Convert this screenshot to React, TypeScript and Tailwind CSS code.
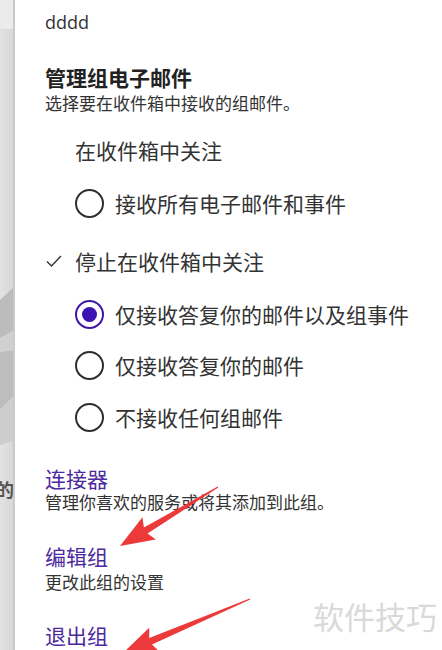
import React from "react";

type Pt = [number, number];

function arrowPoints(tail: Pt, tip: Pt) {
  const dx = tip[0] - tail[0];
  const dy = tip[1] - tail[1];
  const len = Math.hypot(dx, dy);
  const ux = dx / len;
  const uy = dy / len;
  const nx = -uy;
  const ny = ux;
  const headLen = 30;
  const base: Pt = [tip[0] - ux * headLen, tip[1] - uy * headLen];
  const wingBack: Pt = [tip[0] - ux * (headLen + 4), tip[1] - uy * (headLen + 4)];
  const pts: Pt[] = [
    [tail[0] + nx * 0.6, tail[1] + ny * 0.6],
    [base[0] + nx * 3.5, base[1] + ny * 3.5],
    [wingBack[0] + nx * 13, wingBack[1] + ny * 13],
    tip,
    [wingBack[0] - nx * 13, wingBack[1] - ny * 13],
    [base[0] - nx * 3.5, base[1] - ny * 3.5],
    [tail[0] - nx * 0.6, tail[1] - ny * 0.6],
  ];
  return pts.map((p) => p.join(",")).join(" ");
}

function Radio({ checked }: { checked?: boolean }) {
  return checked ? (
    <span className="flex h-[29px] w-[29px] shrink-0 items-center justify-center rounded-full border-2 border-[#3f17a8]">
      <span className="h-[15px] w-[15px] rounded-full bg-[#3b12b3]" />
    </span>
  ) : (
    <span className="h-[29px] w-[29px] shrink-0 rounded-full border-2 border-[#2e2e2e]" />
  );
}

function Option({ label, checked, mt }: { label: string; checked?: boolean; mt: string }) {
  return (
    <div className={`flex h-[30px] items-center pl-[30px] ${mt}`}>
      <Radio checked={checked} />
      <span className="ml-[11px] text-[21px] leading-[28px] text-[#333]">{label}</span>
    </div>
  );
}

function App() {
  return (
    <div
      className="relative flex h-[650px] w-[442px] overflow-hidden bg-white"
      style={{ fontFamily: '"Noto Sans CJK SC", "Noto Sans", sans-serif' }}
    >
      {/* page behind the panel */}
      <div className="relative h-full w-[15px] shrink-0 overflow-hidden bg-gradient-to-r from-[#e2e2e2] to-[#d6d6d6]">
        <div className="h-[30px] border-b border-[#d9d9d9] bg-[#ebebeb]" />
        <svg className="absolute left-0 top-0" width="15" height="650">
          <polygon points="0,300 15,286 15,330 0,338" fill="#bcbcbc" />
          <polygon points="0,338 15,330 15,350 0,352" fill="#d0d0d0" />
          <polygon points="0,352 15,350 15,395 0,410" fill="#bdbdbd" />
          <polygon points="0,410 15,395 15,440 0,445" fill="#cdcdcd" />
        </svg>
        <span className="absolute left-[-4px] top-[477px] text-[18px] font-bold leading-[24px] text-[#555]">的</span>
        <div className="absolute right-0 top-0 h-full w-[2px] bg-[#cacaca]" />
      </div>

      {/* panel */}
      <div className="flex-1 pl-[30px] text-[#333]">
        <div className="pt-[10px] text-[18px] leading-[24px] text-[#333]" style={{ fontFamily: '"Open Sans", "Noto Sans", sans-serif' }}>
          dddd
        </div>
        <div className="mt-[30px] text-[21px] font-bold leading-[26px] text-[#222]">管理组电子邮件</div>
        <div className="mt-[2px] text-[17px] leading-[22px]">选择要在收件箱中接收的组邮件。</div>

        <div className="mt-[22px] pl-[30px] text-[21px] leading-[28px]">在收件箱中关注</div>
        <Option label="接收所有电子邮件和事件" mt="mt-[24px]" />

        <div className="mt-[29px] flex h-[28px] items-center">
          <svg width="16" height="12" viewBox="0 0 16 12" className="ml-[1px]">
            <path d="M1 6.5 L5.5 11 L15 1" fill="none" stroke="#333" strokeWidth="1.4" />
          </svg>
          <span className="ml-[13px] text-[21px] leading-[28px]">停止在收件箱中关注</span>
        </div>
        <Option label="仅接收答复你的邮件以及组事件" checked mt="mt-[24px]" />
        <Option label="仅接收答复你的邮件" mt="mt-[21px]" />
        <Option label="不接收任何组邮件" mt="mt-[22px]" />

        <div className="mt-[34px] text-[21px] leading-[24px] text-[#4c2a9e]">连接器</div>
        <div className="mt-[1px] text-[17px] leading-[22px]">管理你喜欢的服务或将其添加到此组。</div>

        <div className="mt-[31px] text-[21px] leading-[24px] text-[#4c2a9e]">编辑组</div>
        <div className="mt-[3px] text-[17px] leading-[22px]">更改此组的设置</div>

        <div className="mt-[30px] text-[21px] leading-[24px] text-[#4c2a9e]">退出组</div>
      </div>

      {/* watermark */}
      <div className="absolute right-[5px] top-[598px] text-[31px] leading-[36px] text-[#d9d9d9]">软件技巧</div>

      {/* annotation arrows */}
      <svg className="pointer-events-none absolute left-0 top-0" width="442" height="650">
        <polygon points={arrowPoints([218, 487], [120, 546])} fill="#ec3a3a" />
        <polygon points={arrowPoints([250, 599], [123, 653])} fill="#ec3a3a" />
      </svg>
    </div>
  );
}

export default App;
